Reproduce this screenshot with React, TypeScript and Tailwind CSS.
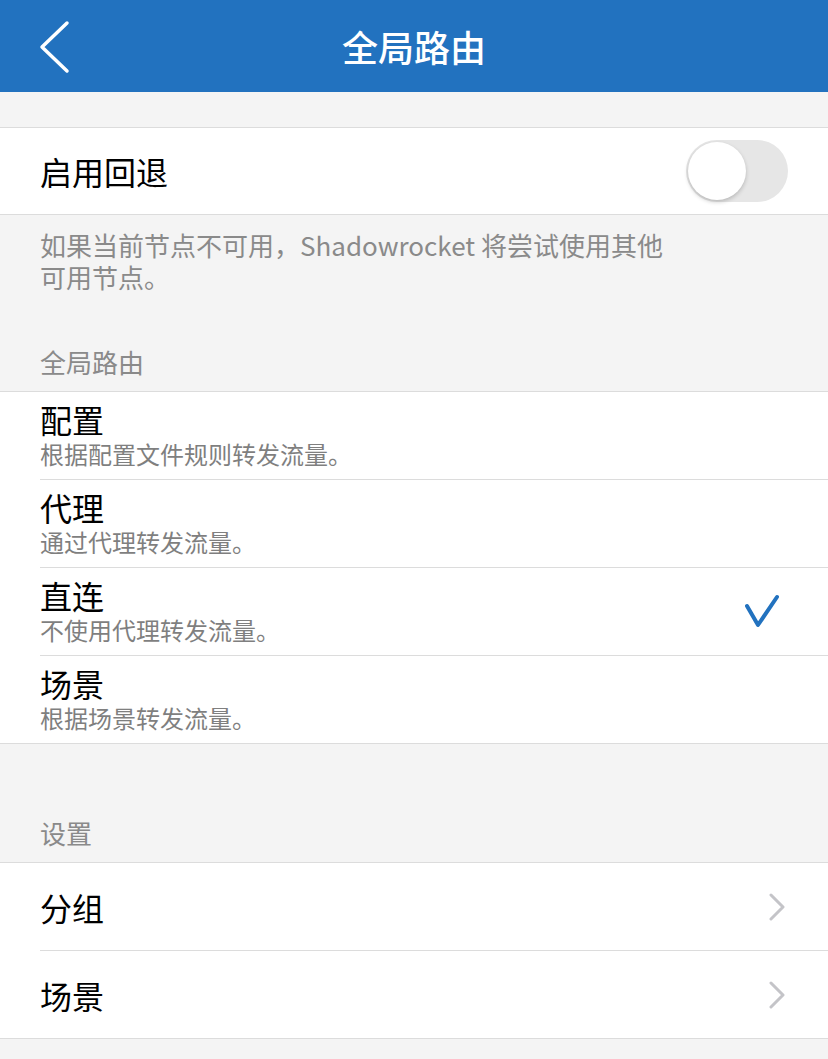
import React, { useState } from 'react';

const font = { fontFamily: '"Noto Sans CJK SC", "Noto Sans", sans-serif' };

type Mode = { key: string; title: string; desc: string };

const modes: Mode[] = [
  { key: 'config', title: '配置', desc: '根据配置文件规则转发流量。' },
  { key: 'proxy', title: '代理', desc: '通过代理转发流量。' },
  { key: 'direct', title: '直连', desc: '不使用代理转发流量。' },
  { key: 'scene', title: '场景', desc: '根据场景转发流量。' },
];

function Check() {
  return (
    <svg width="36" height="36" viewBox="0 0 36 36" fill="none">
      <path d="M3 12 L14 31 L33 3" stroke="#2272bf" strokeWidth="4" strokeLinecap="round" strokeLinejoin="round" />
    </svg>
  );
}

function Chevron() {
  return (
    <svg width="18" height="28" viewBox="0 0 18 28" fill="none">
      <path d="M3 2 L15 14 L3 26" stroke="#c4c4c8" strokeWidth="3" strokeLinecap="round" strokeLinejoin="round" />
    </svg>
  );
}

export default function App() {
  const [fallback, setFallback] = useState(false);
  const [mode, setMode] = useState('direct');

  return (
    <div className="min-h-screen bg-[#f4f4f4]" style={font}>
      {/* header */}
      <div className="h-[92px] bg-[#2272bf] relative flex items-center justify-center">
        <button className="absolute left-[38px] top-[20px]">
          <svg width="34" height="54" viewBox="0 0 34 54" fill="none">
            <path d="M29 3 L4 27 L29 51" stroke="white" strokeWidth="3.5" strokeLinecap="round" strokeLinejoin="round" />
          </svg>
        </button>
        <h1 className="text-[36px] font-medium text-white leading-none">全局路由</h1>
      </div>

      <div className="h-[35px]" />

      {/* fallback toggle */}
      <div className="h-[88px] bg-white border-y border-[#dcdcdc] flex items-center justify-between pl-10 pr-10">
        <span className="text-[32px] text-black leading-none">启用回退</span>
        <button
          onClick={() => setFallback(!fallback)}
          className={`w-[102px] h-[62px] rounded-full p-[2px] flex ${fallback ? 'bg-[#4cd964] justify-end' : 'bg-[#e6e6e6] justify-start'}`}
        >
          <span className="w-[58px] h-[58px] rounded-full bg-white shadow-[0_2px_4px_rgba(0,0,0,0.2)]" />
        </button>
      </div>

      <p className="pl-10 pt-[14px] text-[26px] leading-[32px] text-[#8a8a8a] whitespace-nowrap">
        如果当前节点不可用，Shadowrocket 将尝试使用其他
        <br />
        可用节点。
      </p>

      <div className="pl-10 pt-[53px] pb-[13px] text-[26px] leading-[32px] text-[#8a8a8a]">全局路由</div>

      {/* modes */}
      <div className="bg-white border-y border-[#dcdcdc]">
        {modes.map((m, i) => (
          <div key={m.key} className="pl-10 cursor-pointer" onClick={() => setMode(m.key)}>
            <div
              className={`flex items-start justify-between pr-[48px] ${i < modes.length - 1 ? 'h-[88px] border-b border-[#dcdcdc]' : 'h-[87px]'}`}
            >
              <div className="pt-[7px]">
                <div className="text-[32px] leading-[40px] text-black">{m.title}</div>
                <div className="text-[24px] leading-[30px] text-[#7f7f7f]">{m.desc}</div>
              </div>
              {mode === m.key && (
                <div className="self-center">
                  <Check />
                </div>
              )}
            </div>
          </div>
        ))}
      </div>

      <div className="pl-10 pt-[73px] pb-[13px] text-[26px] leading-[32px] text-[#8a8a8a]">设置</div>

      {/* settings */}
      <div className="bg-white border-y border-[#dcdcdc]">
        {['分组', '场景'].map((t, i) => (
          <div key={t} className="pl-10">
            <div className={`flex items-center justify-between pr-[42px] ${i === 0 ? 'h-[88px] border-b border-[#dcdcdc]' : 'h-[87px]'}`}>
              <span className="text-[32px] leading-none text-black">{t}</span>
              <Chevron />
            </div>
          </div>
        ))}
      </div>
    </div>
  );
}
